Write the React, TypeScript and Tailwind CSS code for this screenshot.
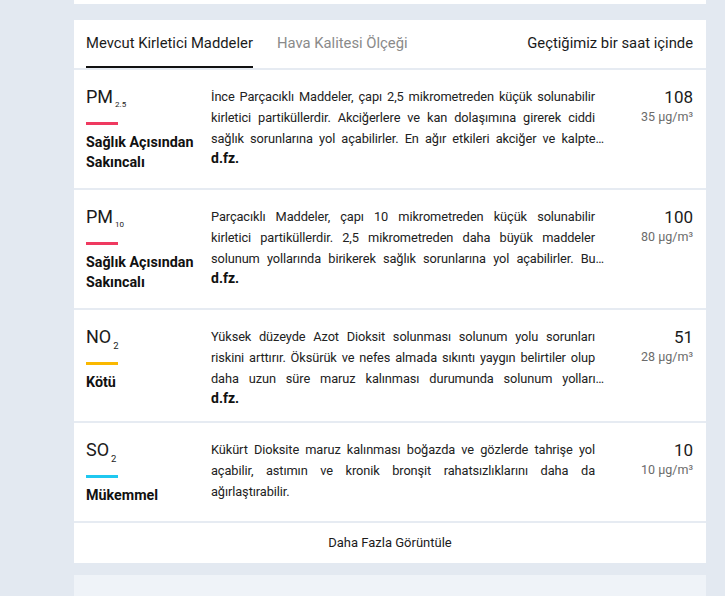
import React from "react";

type Row = {
  name: string;
  sub: string;
  subSmall?: boolean;
  bar: string;
  status: string;
  lines: string[];
  clamped: boolean;
  more: boolean;
  value: string;
  unit: string;
};

const rows: Row[] = [
  {
    name: "PM",
    sub: "2.5",
    subSmall: true,
    bar: "bg-[#ef3a60]",
    status: "Sağlık Açısından Sakıncalı",
    lines: [
      "İnce Parçacıklı Maddeler, çapı 2,5 mikrometreden küçük solunabilir",
      "kirletici partiküllerdir. Akciğerlere ve kan dolaşımına girerek ciddi",
      "sağlık sorunlarına yol açabilirler. En ağır etkileri akciğer ve kalpte…",
    ],
    clamped: true,
    more: true,
    value: "108",
    unit: "35",
  },
  {
    name: "PM",
    sub: "10",
    subSmall: true,
    bar: "bg-[#ef3a60]",
    status: "Sağlık Açısından Sakıncalı",
    lines: [
      "Parçacıklı Maddeler, çapı 10 mikrometreden küçük solunabilir",
      "kirletici partiküllerdir. 2,5 mikrometreden daha büyük maddeler",
      "solunum yollarında birikerek sağlık sorunlarına yol açabilirler. Bu…",
    ],
    clamped: true,
    more: true,
    value: "100",
    unit: "80",
  },
  {
    name: "NO",
    sub: "2",
    bar: "bg-[#fab800]",
    status: "Kötü",
    lines: [
      "Yüksek düzeyde Azot Dioksit solunması solunum yolu sorunları",
      "riskini arttırır. Öksürük ve nefes almada sıkıntı yaygın belirtiler olup",
      "daha uzun süre maruz kalınması durumunda solunum yolları…",
    ],
    clamped: true,
    more: true,
    value: "51",
    unit: "28",
  },
  {
    name: "SO",
    sub: "2",
    bar: "bg-[#1fc8f0]",
    status: "Mükemmel",
    lines: [
      "Kükürt Dioksite maruz kalınması boğazda ve gözlerde tahrişe yol",
      "açabilir, astımın ve kronik bronşit rahatsızlıklarını daha da",
      "ağırlaştırabilir.",
    ],
    clamped: false,
    more: false,
    value: "10",
    unit: "10",
  },
];

export default function App() {
  return (
    <div className="min-h-screen bg-[#e3e9f1] font-['Roboto',sans-serif] text-[#1b1b1b]">
      <div className="ml-[74px] w-[632px]">
        <div className="h-[4px] bg-white" />
        <div className="mt-[16px] bg-white">
          <div className="flex h-[50px] border-b-2 border-[#e6ebf2] pl-3 pr-[13px]">
            <div className="h-[48px] border-b-2 border-[#111] pt-[13px] text-[14.8px] leading-5 text-[#1b1b1b]">
              Mevcut Kirletici Maddeler
            </div>
            <div className="ml-6 pt-[13px] text-[14.8px] leading-5 text-[#8a8a8a]">
              Hava Kalitesi Ölçeği
            </div>
            <div className="ml-auto pt-[13px] text-[14.8px] leading-5 text-[#1b1b1b]">
              Geçtiğimiz bir saat içinde
            </div>
          </div>

          {rows.map((r, i) => (
            <div key={i} className="flex border-b-2 border-[#e6ebf2] pl-3 pr-[13px] pt-4">
              <div className="w-[125px] shrink-0 pb-4">
                <div className="flex items-end text-[18px] leading-[22px] text-[#1b1b1b]">
                  <span>{r.name}</span>
                  <span
                    className={
                      r.subSmall
                        ? "ml-[2px] translate-y-[2px] text-[8px] leading-[10px]"
                        : "ml-[2px] translate-y-[3px] text-[9.5px] leading-[10px]"
                    }
                  >
                    {r.sub}
                  </span>
                </div>
                <div className={`mt-[14px] h-[3px] w-[32px] ${r.bar}`} />
                <div className="mt-[7px] w-[122px] text-[14.3px] font-bold leading-5 text-[#111]">
                  {r.status}
                </div>
              </div>
              <div className="w-[395px] shrink-0 pb-[14px]">
                <div className="text-[12.8px] leading-[21px] tracking-[-0.1px] text-[#222]">
                  {r.lines.map((l, j) => {
                    const last = j === r.lines.length - 1;
                    if (last && !r.clamped) {
                      return (
                        <div key={j} className="w-[384px] whitespace-nowrap">
                          {l}
                        </div>
                      );
                    }
                    return (
                      <div
                        key={j}
                        className={`${last ? "w-[393px]" : "w-[384px]"} whitespace-nowrap text-justify [text-align-last:justify]`}
                      >
                        {l}
                      </div>
                    );
                  })}
                </div>
                {r.more && (
                  <div className="text-[14px] font-bold leading-[18px] text-[#111]">d.fz.</div>
                )}
              </div>
              <div className="flex-1 text-right">
                <div className="text-[17px] leading-[22px] text-[#1b1b1b]">{r.value}</div>
                <div className="text-[12.5px] leading-[18px] text-[#6b6b6b]">
                  {r.unit} µg/m³
                </div>
              </div>
            </div>
          ))}

          <div className="flex h-[40px] items-center justify-center text-[13px] text-[#1b1b1b]">
            Daha Fazla Görüntüle
          </div>
        </div>
        <div className="mt-[12px] h-[40px] bg-[#eff3f8]" />
      </div>
    </div>
  );
}
